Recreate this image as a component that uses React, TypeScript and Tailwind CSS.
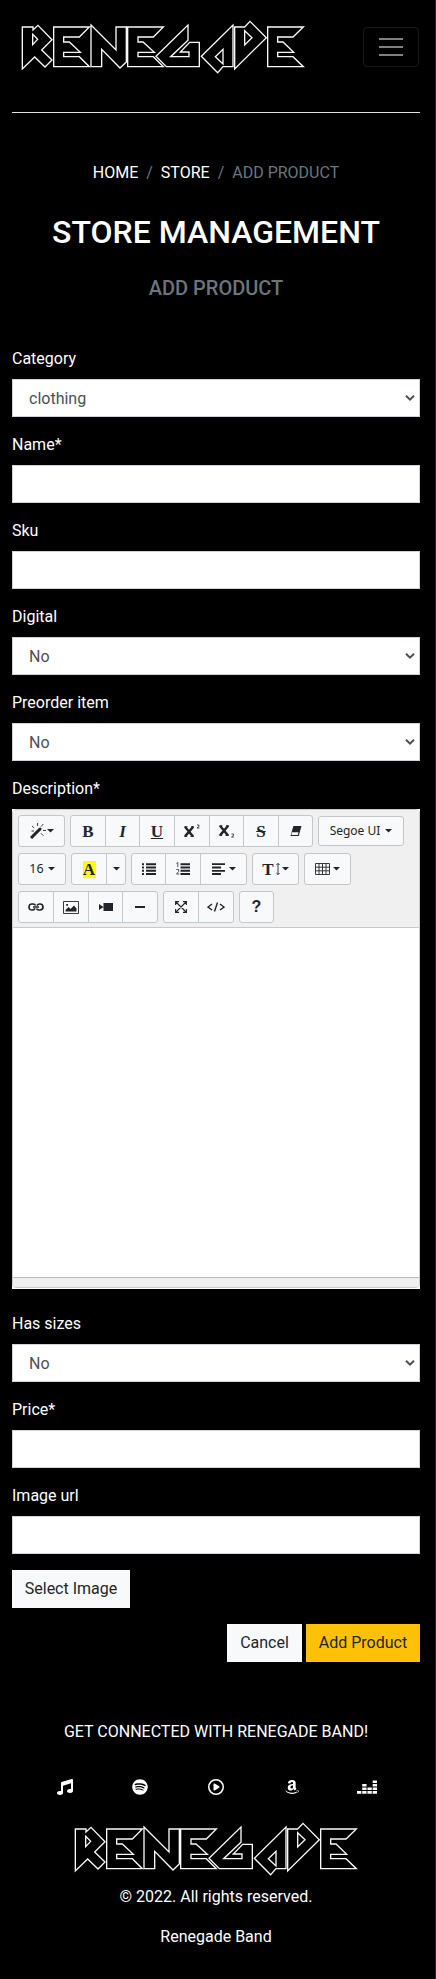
import React from "react";
import { FaMusic, FaSpotify, FaAmazon, FaDeezer } from "react-icons/fa";
import { FaRegCirclePlay } from "react-icons/fa6";

function Logo() {
  return (
    <svg
      role="img"
      aria-label="Renegade"
      className="block h-[54px] w-[300px]"
      viewBox="38 60 900 162"
      fill="none"
      stroke="#f8faf8"
      strokeWidth="4"
      strokeLinejoin="miter"
    >
      <path d="M66 81H98V90L113 76L155 119L124 150L155 180L134 201L103 171L66 207ZM97 103L112 118L97 134Z" />
      <path d="M160 81H267L237 111H190V126H207L240 157H190V170H237L267 200H160Z" />
      <path d="M272 75L347 150V81H378V186L359 204L304 148V200H272Z" />
      <path d="M382 81H489L459 111H413V126H428L462 157H413V170H459L489 200H382Z" />
      <path d="M563 75V121L511 170H566V156H540L568 127H597V200H498L467 169Z" />
      <path d="M698 75V200H668L652 218L603 169ZM668 148V192L645 170Z" />
      <path d="M703 81H733L749 64L798 113L703 207ZM733 92L755 113L733 135Z" />
      <path d="M802 81H909L878 111H832V126H848L880 157H832V170H878L909 200H802Z" />
    </svg>
  );
}

function Field({ label, children }: { label: string; children: React.ReactNode }) {
  return (
    <div className="mb-4">
      <label className="mb-2 block leading-6 text-white">{label}</label>
      {children}
    </div>
  );
}

function TextInput() {
  return <input type="text" className="block h-[38px] w-full border border-[#ced4da] bg-white px-3" />;
}

function Select({ value }: { value: string }) {
  return (
    <div className="flex h-[38px] items-center justify-between border border-[#ced4da] bg-white pr-1 pl-4 text-[#495057]">
      <span className="pt-px">{value}</span>
      <svg className="h-[10px] w-[10px]" viewBox="0 0 10 10" fill="none" stroke="#495057" strokeWidth="2">
        <path d="M1 2.7L5 6.7L9 2.7" />
      </svg>
    </div>
  );
}

function Caret() {
  return (
    <svg className="h-[4px] w-[7px] shrink-0" viewBox="0 0 7 4" fill="#212529">
      <path d="M0 0H7L3.5 3.6Z" />
    </svg>
  );
}

function Group({ children }: { children: React.ReactNode }) {
  return (
    <div className="flex h-8 divide-x divide-[#c4c7ca] overflow-hidden rounded-[3px] border border-[#c4c7ca] bg-[#f8f9fa] text-[#212529]">
      {children}
    </div>
  );
}

function Tool({ className, children }: { className: string; children: React.ReactNode }) {
  return <button className={"flex h-full items-center justify-center " + className}>{children}</button>;
}

const glyph = "font-['Liberation_Serif',serif] text-[17px] font-bold leading-none";

function Editor() {
  return (
    <div className="h-[480px] bg-white">
      <div className="flex h-[479px] flex-col rounded-[4px] border border-[#cbcbcb]">
        <div className="flex h-[118px] flex-col gap-[6px] border-b border-[#c9c9c9] bg-[#f0f0f0] pt-[5px] pl-[5px]">
          <div className="flex h-8 items-center gap-[5px]">
            <Group>
              <Tool className="w-[45px] gap-[1px]">
                <svg className="h-4 w-4" viewBox="0 0 16 16" stroke="#212529" fill="none">
                  <path d="M1 15L6.2 9.8" strokeWidth="3" />
                  <path d="M6.5 9.5L10 6" strokeWidth="3" strokeLinecap="round" />
                  <path d="M2 3L4.2 5M7.6 0V3M13.3 1L11 3.6M13 7.5H16M11 10.3L13.4 12.8M1.5 8H4" strokeWidth="0.9" />
                </svg>
                <Caret />
              </Tool>
            </Group>
            <Group>
              <Tool className="w-[35px]"><span className={glyph}>B</span></Tool>
              <Tool className="w-[34px]"><span className={glyph + " italic"}>I</span></Tool>
              <Tool className="w-[35px]"><span className={glyph + " underline underline-offset-1"}>U</span></Tool>
              <Tool className="w-[35px]">
                <svg className="h-4 w-4" viewBox="0 0 16 16" fill="none" stroke="#212529">
                  <path d="M1 3.8L9 13.4M9.2 3.8L1 13.4" strokeWidth="2.4" />
                  <path d="M.3 3.8H3.5M7 3.8H10M.3 13.4H3.2M6.5 13.4H10" strokeWidth="0.9" />
                  <path d="M13 2H15V3.5L13 5H15.5" strokeWidth="0.8" />
                </svg>
              </Tool>
              <Tool className="w-[34px]">
                <svg className="h-4 w-4" viewBox="0 0 16 16" fill="none" stroke="#212529">
                  <path d="M1 2.8L9 12.4M9.2 2.8L1 12.4" strokeWidth="2.4" />
                  <path d="M.3 2.8H3.5M7 2.8H10M.3 12.4H3.2M6.5 12.4H10" strokeWidth="0.9" />
                  <path d="M12.5 11H14.5V12.5L12.5 14H15" strokeWidth="0.8" />
                </svg>
              </Tool>
              <Tool className="w-[35px]"><span className={glyph + " line-through"}>S</span></Tool>
              <Tool className="w-[33px]">
                <svg className="h-3 w-3" viewBox="0 0 12 12">
                  <path d="M3.4 1H11.5L8.7 11H.5Z" fill="#212529" />
                  <path d="M2 7.2H8.5L7.8 10H1.3Z" fill="#f8f9fa" />
                </svg>
              </Tool>
            </Group>
            <div className="flex h-[30px] w-[86px] items-center justify-center gap-[5px] rounded-[3px] border border-[#c4c7ca] bg-[#f8f9fa] font-['Noto_Sans',sans-serif] text-[12px] text-[#212529]">
              <span>Segoe UI</span><Caret />
            </div>
          </div>
          <div className="flex h-8 gap-[5px]">
            <Group>
              <Tool className="w-[46px] gap-[4px] font-['Noto_Sans',sans-serif] text-[12.5px]"><span>16</span><Caret /></Tool>
            </Group>
            <Group>
              <Tool className="w-[35px]">
                <span className={glyph + " flex h-[17px] w-[13px] items-end justify-center bg-[#ffff00]"}>A</span>
              </Tool>
              <Tool className="w-[18px]"><Caret /></Tool>
            </Group>
            <Group>
              <Tool className="w-[34px]">
                <svg className="h-[14px] w-[14px]" viewBox="0 0 14 14" stroke="#212529" strokeWidth="1.9">
                  <path d="M0 2.2H2M0 5.5H2M0 8.8H2M0 12H2M4 2.2H14M4 5.5H14M4 8.8H14M4 12H14" />
                </svg>
              </Tool>
              <Tool className="w-[35px]">
                <svg className="h-[14px] w-[14px]" viewBox="0 0 14 14" fill="none" stroke="#212529">
                  <path d="M4.5 2.2H14M4.5 5.5H14M4.5 8.8H14M4.5 12H14" strokeWidth="1.9" />
                  <path d="M.5 1.5L1.8 .5V5M.3 7.5H2.7V9.4L.5 12H3.3" strokeWidth="0.8" />
                </svg>
              </Tool>
              <Tool className="w-[45px] gap-[3px]">
                <svg className="h-[14px] w-[14px]" viewBox="0 0 14 14" stroke="#212529" strokeWidth="1.8">
                  <path d="M0 2.2H13M0 5.5H9M0 8.8H13M0 12H9" />
                </svg>
                <Caret />
              </Tool>
            </Group>
            <Group>
              <Tool className="w-[45px]">
                <span className={glyph}>T</span>
                <svg className="mr-[2px] ml-[2px] h-[12px] w-[4px]" viewBox="0 0 4 12" fill="none" stroke="#212529" strokeWidth="0.9">
                  <path d="M2 .5V11.5M.4 2L2 .4L3.6 2M.4 10L2 11.6L3.6 10" />
                </svg>
                <Caret />
              </Tool>
            </Group>
            <Group>
              <Tool className="w-[45px] gap-[3px]">
                <svg className="h-[12px] w-[15px]" viewBox="0 0 15 12" fill="none" stroke="#212529" strokeWidth="0.9">
                  <path d="M.5 .5H14.5V11.5H.5ZM4 .5V11.5M7.5 .5V11.5M11 .5V11.5M.5 4.2H14.5M.5 7.8H14.5" />
                </svg>
                <Caret />
              </Tool>
            </Group>
          </div>
          <div className="flex h-8 gap-[5px]">
            <Group>
              <Tool className="w-[35px]">
                <svg className="h-2 w-4" viewBox="0 0 16 8" fill="none" stroke="#212529" strokeWidth="1.7">
                  <path d="M7 5.5Q6 7 4.5 7H4Q1 7 1 4T4 1H5Q7 1 7.5 2.5M9 2.5Q10 1 11.5 1H12Q15 1 15 4T12 7H11Q9 7 8.5 5.5M5 4H11" />
                </svg>
              </Tool>
              <Tool className="w-[35px]">
                <svg className="h-[13px] w-4" viewBox="0 0 16 13" fill="none" stroke="#212529">
                  <path d="M.5 .5H15.5V12.5H.5Z" strokeWidth="0.9" />
                  <path d="M2.5 10.5V9L5.5 6L7.5 8L11 4.5L13.5 7.5V10.5Z" fill="#212529" stroke="none" />
                  <path d="M3.2 3H5V4.8H3.2Z" fill="#212529" stroke="none" />
                </svg>
              </Tool>
              <Tool className="w-[34px]">
                <svg className="h-2 w-[14px]" viewBox="0 0 14 8" fill="#212529">
                  <path d="M4.5 0H14V8H4.5ZM0 1L4.5 4L0 7Z" />
                </svg>
              </Tool>
              <Tool className="w-[34px]"><span className="h-[2px] w-[10px] bg-[#212529]" /></Tool>
            </Group>
            <Group>
              <Tool className="w-[35px]">
                <svg className="h-3 w-3" viewBox="0 0 12 12" fill="none" stroke="#212529" strokeWidth="1.1">
                  <path d="M1 1L11 11M11 1L1 11M.6 4V.6H4M8 .6H11.4V4M11.4 8V11.4H8M4 11.4H.6V8" />
                </svg>
              </Tool>
              <Tool className="w-[34px]">
                <svg className="h-[10px] w-[18px]" viewBox="0 0 18 10" fill="none" stroke="#212529" strokeWidth="1.4">
                  <path d="M5 2L1 5L5 8M13 2L17 5L13 8M10.5 .5L7.5 9.5" />
                </svg>
              </Tool>
            </Group>
            <Group>
              <Tool className="w-[33px]"><span className="font-['Liberation_Sans',sans-serif] text-[16px] leading-none font-bold">?</span></Tool>
            </Group>
          </div>
        </div>
        <div className="grow" />
        <div className="h-[10px] rounded-b-[3px] border-t border-[#b9b9b9] bg-[#f0f0f0]" />
      </div>
    </div>
  );
}

export default function App() {
  return (
    <div className="h-[1979px] w-full border-r border-[#222] bg-black font-[Roboto,sans-serif] text-base text-white">
      <div className="w-[432px] px-3">
        <header className="flex h-[113px] items-start justify-between border-b border-[#dfe2df]">
          <div className="mt-5 ml-[1px]"><Logo /></div>
          <button className="mt-[27px] mr-[1px] flex h-10 w-14 flex-col items-center justify-center gap-[6px] rounded-[4px] border border-white/10">
            <span className="h-[2px] w-6 bg-white/50" />
            <span className="h-[2px] w-6 bg-white/50" />
            <span className="h-[2px] w-6 bg-white/50" />
          </button>
        </header>
        <nav className="mt-12 flex justify-center gap-2 leading-6">
          <a>HOME</a>
          <span className="text-[#6c757d]">/</span>
          <a>STORE</a>
          <span className="text-[#6c757d]">/</span>
          <span className="text-[#6c757d]">ADD PRODUCT</span>
        </nav>
        <h1 className="mt-7 text-center text-[32px] leading-[38px] font-medium">STORE MANAGEMENT</h1>
        <h2 className="mt-[25px] text-center text-[20px] leading-6 font-medium text-[#6c757d]">ADD PRODUCT</h2>
        <form className="mt-[47px]">
          <Field label="Category"><Select value="clothing" /></Field>
          <Field label="Name*"><TextInput /></Field>
          <Field label="Sku"><TextInput /></Field>
          <Field label="Digital"><Select value="No" /></Field>
          <Field label="Preorder item"><Select value="No" /></Field>
          <div className="mb-[23px]">
            <label className="mb-2 block leading-6">Description*</label>
            <Editor />
          </div>
          <Field label="Has sizes"><Select value="No" /></Field>
          <Field label="Price*"><TextInput /></Field>
          <Field label="Image url"><TextInput /></Field>
          <button className="block h-[38px] w-[118px] bg-[#f8f9fa] text-[#212529]">Select Image</button>
          <div className="mt-4 flex justify-end gap-1">
            <button className="h-[38px] w-[75px] bg-[#f8f9fa] text-[#212529]">Cancel</button>
            <button className="h-[38px] w-[114px] bg-[#ffc107] text-[#212529]">Add Product</button>
          </div>
        </form>
        <footer className="mt-[58px] flex flex-col items-center">
          <p className="leading-6">GET CONNECTED WITH RENEGADE BAND!</p>
          <div className="mt-[33px] grid h-4 w-[378px] grid-cols-5 items-center justify-items-center">
            <FaMusic size={16} />
            <FaSpotify size={16} />
            <FaRegCirclePlay size={16} />
            <FaAmazon size={16} />
            <FaDeezer size={20} />
          </div>
          <div className="mt-[29px]"><Logo /></div>
          <p className="mt-[9px] leading-6">© 2022. All rights reserved.</p>
          <p className="mt-4 leading-6">Renegade Band</p>
        </footer>
      </div>
    </div>
  );
}
